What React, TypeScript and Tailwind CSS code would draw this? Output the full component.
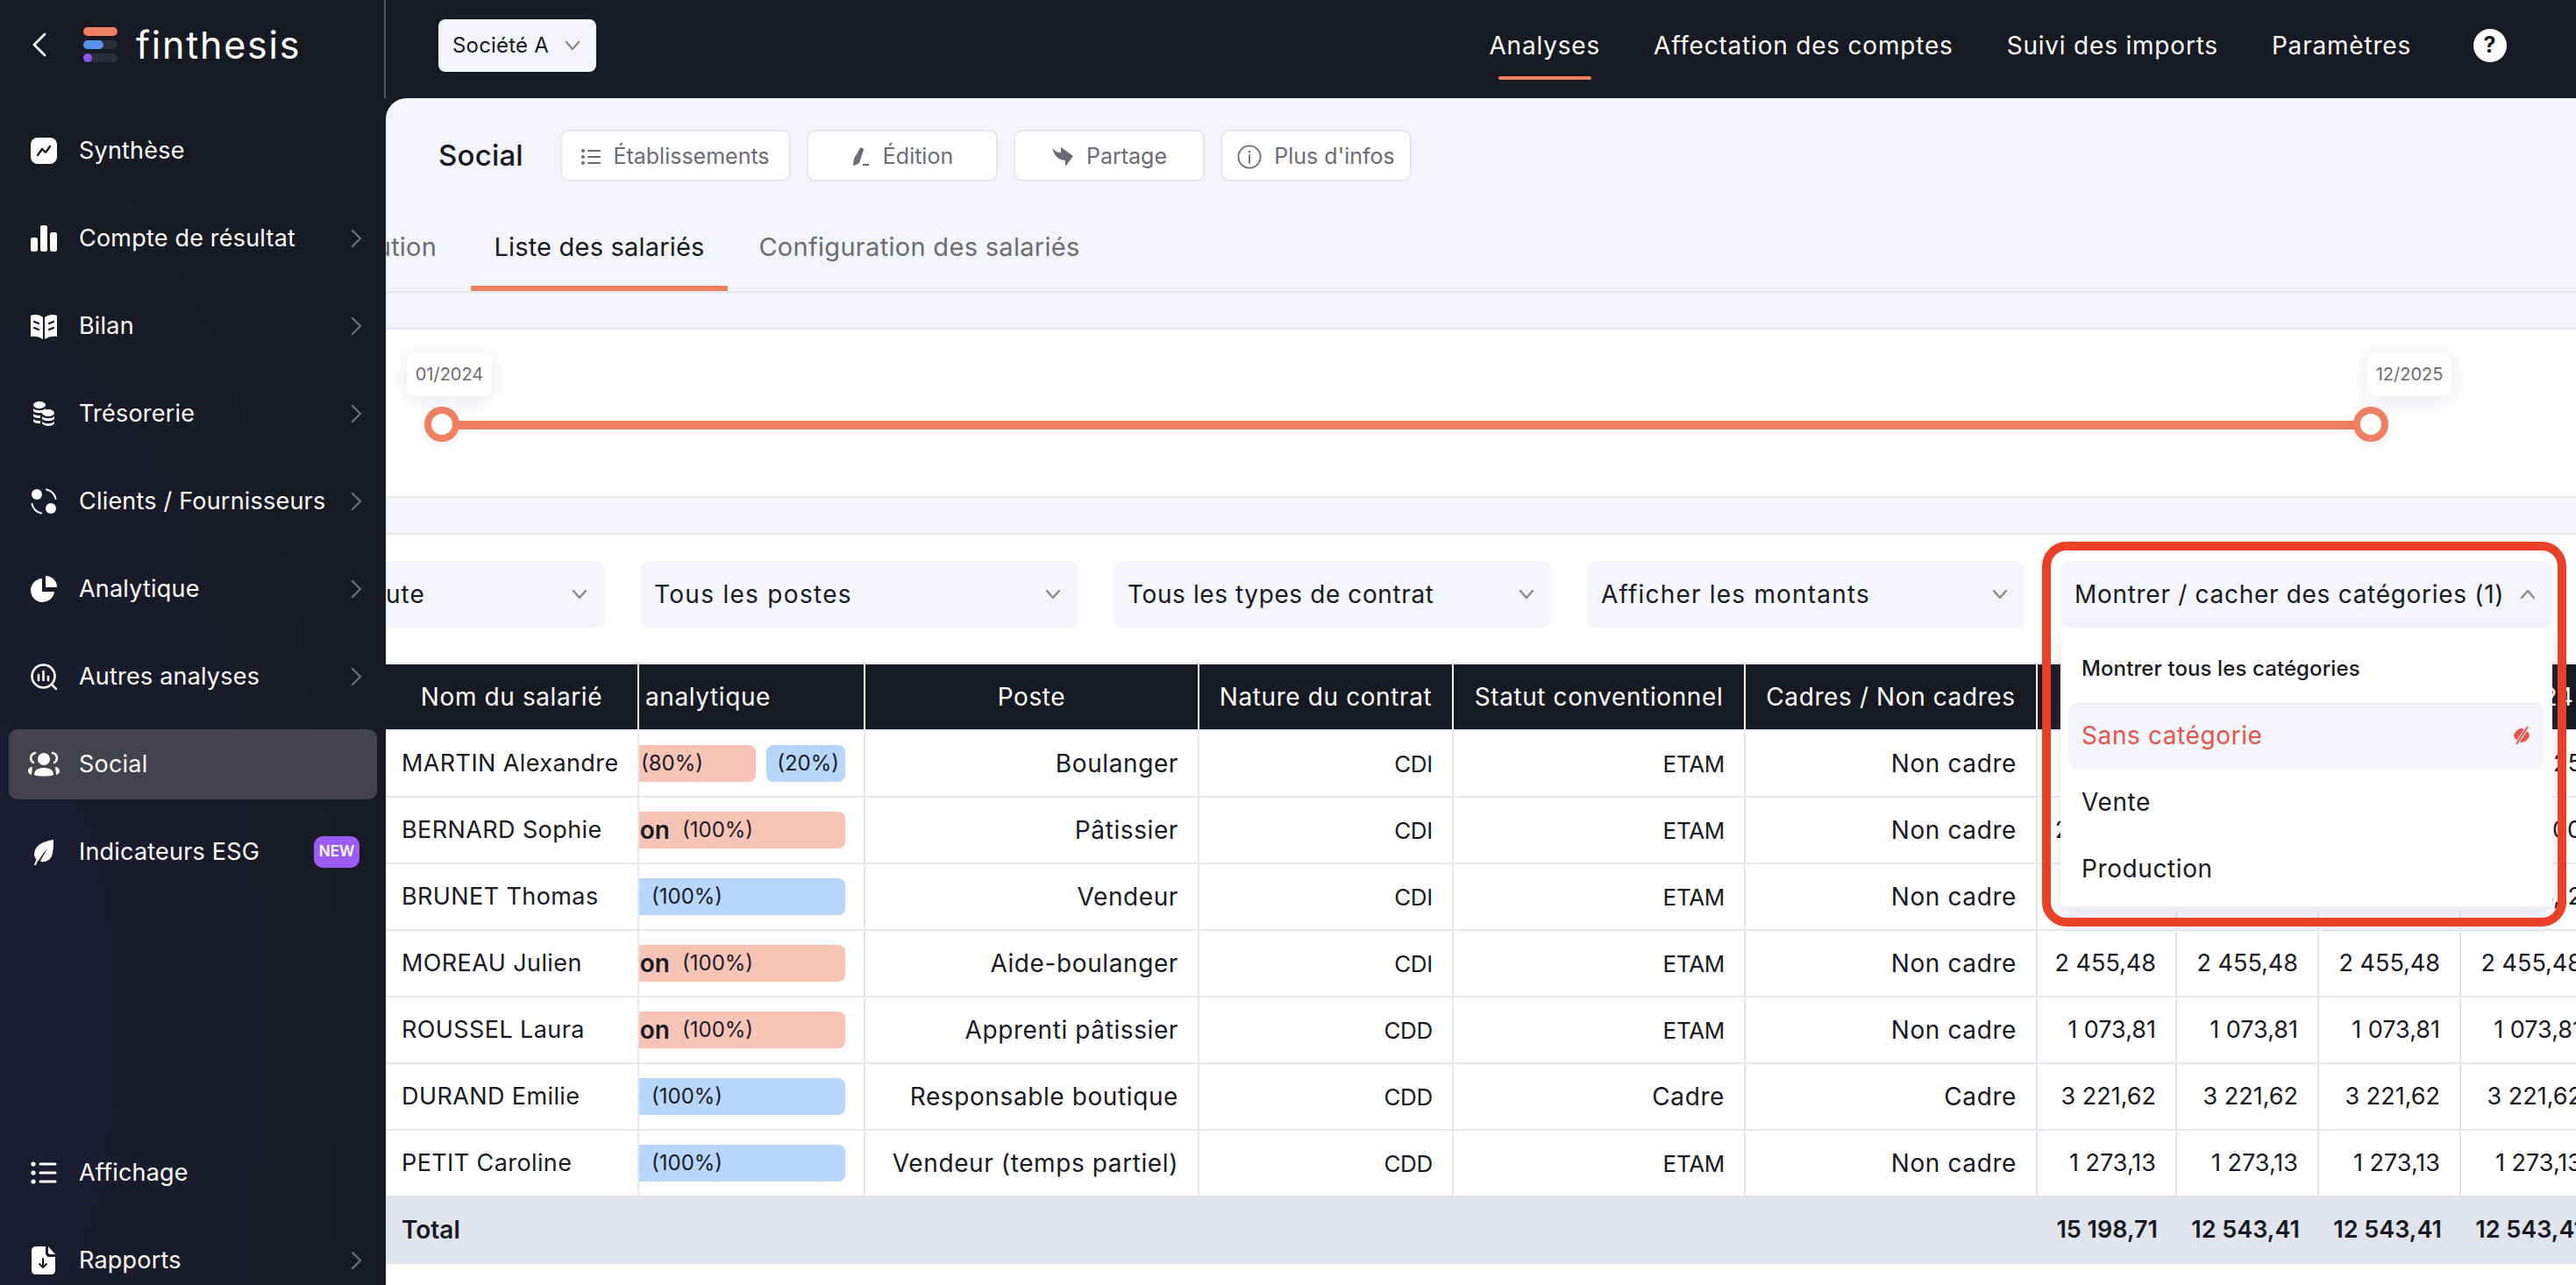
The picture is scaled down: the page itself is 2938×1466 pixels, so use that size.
import React from "react";

const FONT = "font-['Inter','Liberation_Sans',sans-serif]";

const Ico = ({ children, w = 30, h = 30, vb = "0 0 30 30", cls = "" }: any) => (
  <svg width={w} height={h} viewBox={vb} className={"shrink-0 " + cls} fill="none">{children}</svg>
);

const Logo = () => (
  <svg width="40" height="40" viewBox="0 0 40 40" className="shrink-0">
    <rect x="0" y="0" width="39" height="10" rx="5" fill="#ef8060" />
    <rect x="0" y="15" width="39" height="10" rx="5" fill="#2c2d3a" />
    <rect x="0" y="15" width="23" height="10" rx="5" fill="#5b94ee" />
    <rect x="0" y="30" width="39" height="10" rx="5" fill="#2c2d3a" />
    <rect x="0" y="30" width="10" height="10" rx="5" fill="#8f56ec" />
  </svg>
);

const icons: Record<string, React.ReactNode> = {
  synthese: (
    <Ico>
      <rect x="0" y="0" width="30" height="30" rx="8" fill="#fff" />
      <path d="M8 20l5-7 4 4 5-7" stroke="#181a23" strokeWidth="2.4" strokeLinecap="round" strokeLinejoin="round" />
    </Ico>
  ),
  compte: (
    <Ico>
      <rect x="0" y="14" width="8" height="16" rx="2.5" fill="#fff" />
      <rect x="11" y="0" width="8" height="30" rx="2.5" fill="#fff" />
      <rect x="22" y="8" width="8" height="22" rx="2.5" fill="#fff" />
    </Ico>
  ),
  bilan: (
    <Ico>
      <path d="M0 3c5-2 10-1 14 2v25C10 27 5 26 0 27z" fill="#fff" />
      <path d="M30 3c-5-2-10-1-14 2v25c4-3 9-4 14-3z" fill="#fff" />
      <path d="M4 10l5 2M4 17l5 2M26 10l-5 2M26 17l-5 2" stroke="#181a23" strokeWidth="2.2" strokeLinecap="round" />
    </Ico>
  ),
  treso: (
    <Ico>
      <ellipse cx="10" cy="5" rx="7" ry="4" fill="#fff" />
      <path d="M3 9c3 3 11 3 14 0v3c-3 3-11 3-14 0zM3 15c2 2 5 2 8 2v3c-3 0-6 0-8-2zM3 21c2 2 5 2 8 2v3c-3 0-6 0-8-2z" fill="#fff" />
      <ellipse cx="20" cy="14" rx="7" ry="4" fill="#fff" />
      <path d="M13 18c3 3 11 3 14 0v3c-3 3-11 3-14 0zM13 24c3 3 11 3 14 0v2c-3 4-11 4-14 0z" fill="#fff" />
    </Ico>
  ),
  clients: (
    <Ico>
      <circle cx="7" cy="7" r="6" fill="#fff" />
      <circle cx="23" cy="23" r="6" fill="#fff" />
      <path d="M18 1.5A14 14 0 0 1 28.5 12M12 28.5A14 14 0 0 1 1.5 18" stroke="#fff" strokeWidth="2" strokeLinecap="round" />
    </Ico>
  ),
  analytique: (
    <Ico>
      <path d="M13 3a13.5 13.5 0 1 0 14 15H13z" fill="#fff" />
      <path d="M17 0a13 13 0 0 1 13 13H17z" fill="#fff" />
    </Ico>
  ),
  autres: (
    <Ico>
      <circle cx="14.5" cy="14.5" r="13" stroke="#fff" strokeWidth="2.6" />
      <path d="M24 24l6 6" stroke="#fff" strokeWidth="2.6" strokeLinecap="round" />
      <path d="M9 13v6M14.5 9v10M20 15v4" stroke="#fff" strokeWidth="2.6" strokeLinecap="round" />
    </Ico>
  ),
  social: (
    <Ico w={36} vb="0 0 36 30">
      <circle cx="18" cy="9" r="7" fill="#fff" />
      <path d="M7 27c0-6 5-8 11-8s11 2 11 8c-3 2-19 2-22 0z" fill="#fff" />
      <path d="M8 2a6 6 0 0 0-2 11M28 2a6 6 0 0 1 2 11" stroke="#fff" strokeWidth="2.6" strokeLinecap="round" />
      <path d="M0 23c0-3 2-5 5-5l-1 9c-2-1-4-2-4-4zM36 23c0-3-2-5-5-5l1 9c2-1 4-2 4-4z" fill="#fff" />
    </Ico>
  ),
  esg: (
    <Ico>
      <path d="M26 1C14 3 5 7 4 17c0 4 2 7 5 8 3-5 6-10 10-13-3 4-6 9-8 14 8 1 13-3 14-10 1-5 1-10 1-15z" fill="#fff" />
      <path d="M8 22l-3 8" stroke="#fff" strokeWidth="2" strokeLinecap="round" />
    </Ico>
  ),
  affichage: (
    <Ico>
      <circle cx="3" cy="5" r="2.6" fill="#fff" />
      <circle cx="3" cy="15" r="2.6" fill="#fff" />
      <circle cx="3" cy="25" r="2.6" fill="#fff" />
      <path d="M11 5h17M11 15h17M11 25h17" stroke="#fff" strokeWidth="3" strokeLinecap="round" />
    </Ico>
  ),
  rapports: (
    <Ico h={32} vb="0 0 30 32">
      <path d="M6 0h11v8c0 2 2 4 4 4h7v15c0 3-2 5-5 5H6c-3 0-5-2-5-5V5c0-3 2-5 5-5z" fill="#fff" />
      <path d="M20 0l8 9h-6c-1 0-2-1-2-2z" fill="#fff" />
      <path d="M14 14v10M10 20l4 4 4-4" stroke="#181a23" strokeWidth="2" strokeLinecap="round" strokeLinejoin="round" />
    </Ico>
  ),
};

const ChevR = () => (
  <svg width="14" height="22" viewBox="0 0 14 22" className="shrink-0" fill="none">
    <path d="M2 2l9 9-9 9" stroke="#6b6c75" strokeWidth="2.4" strokeLinecap="round" strokeLinejoin="round" />
  </svg>
);
const ChevD = ({ up = false }: { up?: boolean }) => (
  <svg width="18" height="12" viewBox="0 0 18 12" className="shrink-0" fill="none">
    <path d={up ? "M2 10l7-8 7 8" : "M2 2l7 8 7-8"} stroke="#85868e" strokeWidth="2.2" strokeLinecap="round" strokeLinejoin="round" />
  </svg>
);

const side = [
  { k: "synthese", t: "Synthèse" },
  { k: "compte", t: "Compte de résultat", c: 1 },
  { k: "bilan", t: "Bilan", c: 1 },
  { k: "treso", t: "Trésorerie", c: 1 },
  { k: "clients", t: "Clients / Fournisseurs", c: 1 },
  { k: "analytique", t: "Analytique", c: 1 },
  { k: "autres", t: "Autres analyses", c: 1 },
  { k: "social", t: "Social", a: 1 },
  { k: "esg", t: "Indicateurs ESG", n: 1 },
];

const SideItem = ({ it }: { it: any }) => (
  <div className={"mx-[10px] mb-[20px] h-[80px] shrink-0 flex items-center rounded-[10px] pl-[25px] pr-[16px] " + (it.a ? "bg-[#42434c]" : "")}>
    <div className="w-[30px] flex justify-center shrink-0">{icons[it.k]}</div>
    <span className="ml-[25px] text-[27px] text-white tracking-[0.2px] whitespace-nowrap">{it.t}</span>
    <div className="ml-auto flex items-center">
      {it.c ? <ChevR /> : null}
      {it.n ? (
        <span className="mr-[4px] h-[36px] w-[52px] flex items-center justify-center rounded-[10px] bg-[#9b5cf5] text-white text-[17px] font-semibold">NEW</span>
      ) : null}
    </div>
  </div>
);

const BtnIcon = ({ k }: { k: string }) => {
  if (k === "list")
    return (
      <Ico w={22} h={20} vb="0 0 22 20">
        <circle cx="2" cy="3" r="2" fill="#6b6c75" /><circle cx="2" cy="10" r="2" fill="#6b6c75" /><circle cx="2" cy="17" r="2" fill="#6b6c75" />
        <path d="M8 3h13M8 10h13M8 17h13" stroke="#6b6c75" strokeWidth="2.2" strokeLinecap="round" />
      </Ico>
    );
  if (k === "edit")
    return (
      <Ico w={22} h={24} vb="0 0 22 22">
        <path d="M10 1c2-1 4 0 4 2l-5 15-6 3c-1 0-1-1-1-1l1-7z" fill="#6b6c75" />
        <path d="M13 20h7" stroke="#6b6c75" strokeWidth="1.8" />
      </Ico>
    );
  if (k === "share")
    return (
      <Ico w={26} h={24} vb="0 0 26 22">
        <path d="M1 0c2 4 6 6 10 6V0l14 10-9 12V15C9 15 3 10 1 0z" fill="#6b6c75" />
      </Ico>
    );
  return (
    <Ico w={28} h={28} vb="0 0 28 28">
      <circle cx="14" cy="14" r="12.6" stroke="#6b6c75" strokeWidth="1.8" />
      <path d="M14 12v9" stroke="#6b6c75" strokeWidth="1.8" strokeLinecap="round" />
      <circle cx="14" cy="8" r="1.3" fill="#6b6c75" />
    </Ico>
  );
};

const btns = [
  { k: "list", t: "Établissements", w: "w-[263px]" },
  { k: "edit", t: "Édition", w: "w-[218px]" },
  { k: "share", t: "Partage", w: "w-[218px]" },
  { k: "info", t: "Plus d'infos", w: "w-[218px]" },
];

const filters = [
  { t: "Rémunération brute", c: "tracking-[1px]" },
  { t: "Tous les postes", c: "tracking-[1.3px]" },
  { t: "Tous les types de contrat", c: "tracking-[0.6px]" },
  { t: "Afficher les montants", c: "tracking-[1.2px]" },
];

type Row = {
  name: string;
  tags: React.ReactNode;
  poste: string;
  nature: string;
  statut: string;
  cadre: string;
  v: string[];
};

const Tag = ({ color, name, clip, pct, w }: { color: string; name?: string; clip?: string; pct: string; w: string }) => (
  <div className={"h-[42px] flex items-center rounded-r-[8px] text-[24px] text-[#181a23] whitespace-nowrap overflow-hidden " + color + " " + w}>
    {name ? (
      <span className={"flex justify-end overflow-hidden shrink-0 " + (clip === "on" ? "w-[35px] mr-[14px]" : "w-[1px] mr-[13px]")}>
        <b className="shrink-0 font-semibold text-[28px]">{name}</b>
      </span>
    ) : null}
    <span className={name ? "" : "pl-[2px]"}>{pct}</span>
  </div>
);

const PINK = "bg-[#f8c4b8]";
const BLUE = "bg-[#b8d6fb]";
const fullP = <Tag color={PINK} name="Production" clip="on" pct="(100%)" w="w-[235px]" />;
const fullB = <Tag color={BLUE} name="Vente" clip="e" pct="(100%)" w="w-[235px]" />;

const rows: Row[] = [
  {
    name: "MARTIN Alexandre",
    tags: (
      <div className="flex gap-[12px]">
        <Tag color={PINK} pct="(80%)" w="w-[133px]" />
        <div className="h-[42px] w-[90px] rounded-[8px] bg-[#b8d6fb] flex items-center justify-end pr-[7px] text-[24px] text-[#181a23]">(20%)</div>
      </div>
    ),
    poste: "Boulanger", nature: "CDI", statut: "ETAM", cadre: "Non cadre",
    v: ["1 545,25", "1 545,25", "1 545,25", "1 545,25"],
  },
  { name: "BERNARD Sophie", tags: fullP, poste: "Pâtissier", nature: "CDI", statut: "ETAM", cadre: "Non cadre", v: ["2 800,00", "1 800,00", "1 800,00", "1 800,00"] },
  { name: "BRUNET Thomas", tags: fullB, poste: "Vendeur", nature: "CDI", statut: "ETAM", cadre: "Non cadre", v: ["1 174,12", "1 174,12", "1 174,12", "1 174,12"] },
  { name: "MOREAU Julien", tags: fullP, poste: "Aide-boulanger", nature: "CDI", statut: "ETAM", cadre: "Non cadre", v: Array(4).fill("2 455,48") },
  { name: "ROUSSEL Laura", tags: fullP, poste: "Apprenti pâtissier", nature: "CDD", statut: "ETAM", cadre: "Non cadre", v: Array(4).fill("1 073,81") },
  { name: "DURAND Emilie", tags: fullB, poste: "Responsable boutique", nature: "CDD", statut: "Cadre", cadre: "Cadre", v: Array(4).fill("3 221,62") },
  { name: "PETIT Caroline", tags: fullB, poste: "Vendeur (temps partiel)", nature: "CDD", statut: "ETAM", cadre: "Non cadre", v: Array(4).fill("1 273,13") },
];

const widths = ["w-[289px]", "w-[258px]", "w-[381px]", "w-[290px]", "w-[333px]", "w-[333px]", "w-[159px]", "w-[162px]", "w-[162px]", "w-[162px]"];

const Th = ({ children, last }: { children: React.ReactNode; last?: boolean }) => (
  <th className={"p-0 h-[76px] bg-[#181a23] border-t-2 border-t-[#e5e7ef] text-white text-[28px] tracking-[0.6px] font-normal text-center whitespace-nowrap overflow-hidden " + (last ? "" : "border-r-2 border-r-white")}>{children}</th>
);

const NUM = "pr-[22px] text-right text-[27px] tracking-[0px] ";
const LOW = "pr-[22px] text-right text-[28px] tracking-[0.6px] ";
const CAP = "pr-[22px] text-right text-[26px] tracking-[-0.3px] ";

export default function App() {
  return (
    <div className={"w-[2938px] h-[1466px] flex overflow-hidden bg-[#181a23] text-[#181a23] " + FONT}>
      {/* Sidebar */}
      <aside className="w-[440px] h-[1466px] shrink-0 flex flex-col overflow-hidden bg-[radial-gradient(ellipse_at_0%_80%,#1c1c33_0%,#181a23_65%)]">
        <div className="h-[112px] shrink-0 flex items-center pl-[37px] pb-[10px] border-r-2 border-[#53545c]">
          <svg width="16" height="28" viewBox="0 0 16 28" fill="none" className="shrink-0">
            <path d="M14 2L2 14l12 12" stroke="#fff" strokeWidth="2.8" strokeLinecap="round" strokeLinejoin="round" />
          </svg>
          <div className="ml-[42px]"><Logo /></div>
          <span className="ml-[20px] text-[43px] tracking-[1.8px] text-white font-normal leading-none">finthesis</span>
        </div>
        <div className="h-[20px] shrink-0" />
        {side.map((it) => <SideItem key={it.t} it={it} />)}
        <div className="mt-[266px] flex flex-col">
          <SideItem it={{ k: "affichage", t: "Affichage" }} />
          <SideItem it={{ k: "rapports", t: "Rapports", c: 1 }} />
        </div>
      </aside>

      {/* Main */}
      <div className="flex-1 min-w-0 flex flex-col">
        <header className="h-[112px] shrink-0 flex items-start pl-[60px] pt-[22px] text-white">
          <div className="h-[60px] w-[180px] flex items-center justify-between rounded-[8px] bg-[#f3f5fa] pl-[16px] pr-[18px] text-[#181a23] text-[24px] tracking-[0.2px]">
            <span className="whitespace-nowrap">Société A</span>
            <ChevD />
          </div>
          <nav className="ml-auto mr-[79px] flex items-start gap-[61px] text-[28px] tracking-[0.8px] whitespace-nowrap">
            <div className="relative h-[60px] flex items-center">
              Analyses
              <span className="absolute left-[10px] right-[10px] top-[65px] h-[4px] rounded-[2px] bg-[#ef8060]" />
            </div>
            <div className="h-[60px] flex items-center">Affectation des comptes</div>
            <div className="h-[60px] flex items-center">Suivi des imports</div>
            <div className="h-[60px] flex items-center">Paramètres</div>
            <div className="h-[60px] flex items-center ml-[10px]">
              <span className="w-[38px] h-[38px] rounded-full bg-white text-[#181a23] text-[25px] font-bold flex items-center justify-center">?</span>
            </div>
          </nav>
        </header>

        <main className="flex-1 min-h-0 flex flex-col bg-[#f3f5fa] rounded-tl-[24px] overflow-hidden">
          {/* Title row */}
          <div className="pt-[36px] pl-[60px] flex items-center h-[95px] shrink-0">
            <h1 className="w-[139px] text-[33px] font-medium tracking-[0.2px]">Social</h1>
            <div className="flex gap-[18px]">
              {btns.map((b) => (
                <div key={b.t} className={"h-[59px] flex items-center justify-center gap-[14px] rounded-[10px] border-2 border-[#e5e7ef] bg-white text-[#6b6c75] text-[25px] pt-[2px] " + b.w}>
                  <BtnIcon k={b.k} />
                  <span>{b.t}</span>
                </div>
              ))}
            </div>
          </div>

          {/* Tabs */}
          <div className="mt-[25px] h-[102px] shrink-0 flex gap-[10px] border-b-2 border-[#e5e7ef] overflow-hidden text-[29px] tracking-[0.2px]">
            <div className="w-[87px] flex justify-end overflow-hidden shrink-0">
              <div className="h-[100px] shrink-0 pr-[29px] flex items-center text-[#6b6c75] whitespace-nowrap">Distribution</div>
            </div>
            <div className="h-[100px] w-[293px] flex items-center justify-center border-b-[6px] border-[#ef8060] text-[#181a23] whitespace-nowrap pt-[6px]">Liste des salariés</div>
            <div className="h-[100px] w-[417px] flex items-center justify-center text-[#6b6c75] whitespace-nowrap tracking-[0.3px]">Configuration des salariés</div>
          </div>

          <div className="h-[40px] shrink-0" />

          {/* Slider */}
          <section className="h-[194px] shrink-0 bg-white border-y-2 border-[#e5e7ef] pt-[104px] pl-[64px]">
            <div className="relative w-[2200px] h-[10px] bg-[#ef8060]">
              <div className="absolute left-[-20px] top-[-16px] w-[40px] h-[40px] rounded-full border-[8px] border-[#ef8060] bg-white shadow-[0_2px_12px_rgba(120,130,170,0.18)]" />
              <div className="absolute right-[-20px] top-[-16px] w-[40px] h-[40px] rounded-full border-[8px] border-[#ef8060] bg-white shadow-[0_2px_12px_rgba(120,130,170,0.18)]" />
              <div className="absolute left-[-40px] top-[-78px] w-[97px] h-[50px] flex items-center justify-center rounded-[10px] bg-white text-[20px] text-[#6b6c75] shadow-[0_4px_24px_rgba(120,130,170,0.2)]">01/2024</div>
              <div className="absolute right-[-92px] top-[-78px] w-[96px] h-[50px] flex items-center justify-center rounded-[10px] bg-white text-[20px] text-[#6b6c75] shadow-[0_4px_24px_rgba(120,130,170,0.2)]">12/2025</div>
            </div>
          </section>

          <div className="h-[40px] shrink-0" />

          {/* Table card */}
          <section className="flex-1 min-h-0 bg-white border-t-2 border-[#e5e7ef] flex flex-col">
            <div className="pt-[30px] h-[146px] shrink-0 flex justify-end gap-[40px] pr-[27px]">
              {filters.map((f) => (
                <div key={f.t} className={"h-[76px] w-[500px] shrink-0 flex items-center justify-between rounded-[10px] bg-[#f3f5fa] pl-[16px] pr-[20px] text-[28px] whitespace-nowrap " + f.c}>
                  <span>{f.t}</span>
                  <ChevD />
                </div>
              ))}
              <div className="relative h-[76px] w-[561px] shrink-0 z-10">
                <div className="h-[76px] flex items-center justify-between rounded-[10px] bg-[#f3f5fa] pl-[16px] pr-[19px] text-[28px] tracking-[0.7px] whitespace-nowrap">
                  <span>Montrer / cacher des catégories (1)</span>
                  <ChevD up />
                </div>
                <div className="absolute left-0 right-0 top-[76px] h-[324px] rounded-b-[10px] bg-white border-b-[6px] border-[#eef0f5] shadow-[0_6px_20px_rgba(120,130,170,0.18)] px-[9px] pt-[9px] text-[28px] tracking-[0.6px]">
                  <div className="h-[76px] flex items-center pl-[15px] text-[24px] tracking-[0.1px] font-medium">Montrer tous les catégories</div>
                  <div className="h-[76px] flex items-center justify-between rounded-[10px] bg-[#f3f5fa] pl-[15px] pr-[15px] text-[#e5534b]">
                    <span>Sans catégorie</span>
                    <svg width="22" height="24" viewBox="0 0 22 24">
                      <path d="M11 4C7 4 3 8 2 12c1 4 5 8 9 8s8-4 9-8c-1-4-5-8-9-8z" fill="#e5534b" />
                      <path d="M18 2L5 22" stroke="#f3f5fa" strokeWidth="4" />
                      <path d="M18 2L5 22" stroke="#e5534b" strokeWidth="2" />
                    </svg>
                  </div>
                  <div className="h-[76px] flex items-center pl-[15px]">Vente</div>
                  <div className="h-[76px] flex items-center pl-[15px]">Production</div>
                </div>
              </div>
            </div>

            <div className="overflow-hidden">
              <table className="table-fixed w-[2529px] border-separate border-spacing-0">
                <colgroup>
                  {widths.map((w, i) => <col key={i} className={w} />)}
                </colgroup>
                <thead>
                  <tr>
                    <Th>Nom du salarié</Th>
                    <Th>
                      <div className="w-[150px] flex justify-end overflow-hidden"><span className="shrink-0">Catégorie analytique</span></div>
                    </Th>
                    <Th>Poste</Th>
                    <Th>Nature du contrat</Th>
                    <Th>Statut conventionnel</Th>
                    <Th>Cadres / Non cadres</Th>
                    <Th>jan. 24</Th>
                    <Th>fév. 24</Th>
                    <Th>mars 24</Th>
                    <Th last>avr. 24</Th>
                  </tr>
                </thead>
                <tbody>
                  {rows.map((r, i) => {
                    const bb = i === 0
                      ? "border-t-2 border-t-[#e5e7ef] border-b-2 border-b-[#e5e7ef] h-[78px] "
                      : i < rows.length - 1
                        ? "border-b-2 border-b-[#e5e7ef] h-[76px] "
                        : "h-[74px] ";
                    const td = "p-0 whitespace-nowrap overflow-hidden border-r-2 border-r-[#e5e7ef] " + bb;
                    return (
                      <tr key={r.name}>
                        <td className={td + "pl-[18px] text-left text-[27px] tracking-[0.4px]"}>{r.name}</td>
                        <td className={td}>{r.tags}</td>
                        <td className={td + LOW}>{r.poste}</td>
                        <td className={td + CAP}>{r.nature}</td>
                        <td className={td + (r.statut === "ETAM" ? CAP : LOW)}>{r.statut}</td>
                        <td className={td + LOW}>{r.cadre}</td>
                        {r.v.map((v, j) => <td key={j} className={td + NUM}>{v}</td>)}
                      </tr>
                    );
                  })}
                  <tr className="bg-[#e1e4ec] font-semibold text-[27px]">
                    <td className="p-0 h-[78px] pl-[18px] text-[28px]" colSpan={6}>Total</td>
                    {["15 198,71", "12 543,41", "12 543,41", "12 543,41"].map((v, j) => (
                      <td key={j} className="p-0 pr-[22px] text-right whitespace-nowrap">{v}</td>
                    ))}
                  </tr>
                </tbody>
              </table>
            </div>
          </section>
        </main>
      </div>

      {/* Annotation frame */}
      <div className="absolute left-[2329px] top-[618px] w-[598px] h-[439px] rounded-[28px] border-[10px] border-[#ea4027] pointer-events-none z-20" />
    </div>
  );
}
